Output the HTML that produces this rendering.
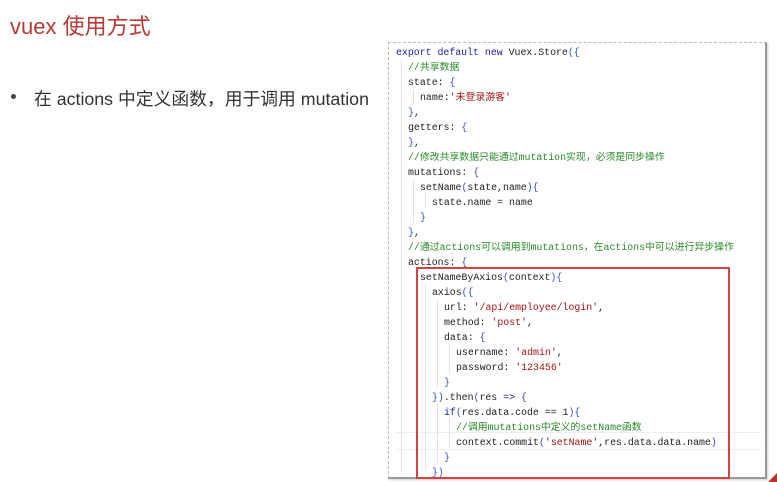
<!DOCTYPE html>
<html><head><meta charset="utf-8"><style>
body{margin:0;width:777px;height:482px;background:#fff;position:relative;overflow:hidden;font-family:"Liberation Sans","Noto Sans CJK SC",sans-serif}
.t{position:absolute;left:10px;top:9px;font-size:22px;color:#b73a36;white-space:nowrap}
.b{position:absolute;left:34px;top:85px;font-size:17.8px;color:#333;white-space:nowrap}
.dot{position:absolute;left:11px;top:94px;width:5px;height:5px;border-radius:50%;background:#444}
.panel{position:absolute;left:388px;top:42px;width:376px;height:434px;border:1px dashed #bbb;border-right:2px solid #999;border-bottom:2px solid #999;box-shadow:1px 1px 2px #ccc}
.c{position:absolute;left:0;top:0;font-family:"Liberation Mono","Noto Sans CJK SC",monospace;font-size:9.9px;color:#222;white-space:pre}
.l{position:absolute;height:15px;line-height:15px}
.k{color:#2222aa}.s{color:#a31515}.m{color:#2a8a2a}.p{color:#3355bb}
.g{position:absolute;width:1px;background:#e2e2e2}
.red{position:absolute;left:416px;top:267px;width:310px;height:208px;border:2px solid #d9403e}
.hl{position:absolute;left:396px;top:432px;width:365px;height:16px;border-top:1px solid #eee;border-bottom:1px solid #eee}
</style></head><body>
<div class="t">vuex 使用方式</div>
<div class="dot"></div>
<div class="b">在 actions 中定义函数，用于调用 mutation</div>
<div class="panel"></div>
<div class="hl"></div>
<div class="g" style="left:401px;top:61px;height:412px"></div>
<div class="g" style="left:413px;top:90px;height:14px"></div>
<div class="g" style="left:413px;top:179px;height:44px"></div>
<div class="g" style="left:425px;top:194px;height:14px"></div>
<div class="g" style="left:425px;top:284px;height:185px"></div>
<div class="g" style="left:437px;top:299px;height:88px"></div>
<div class="g" style="left:449px;top:343px;height:30px"></div>
<div class="g" style="left:437px;top:403px;height:60px"></div>
<div class="g" style="left:449px;top:418px;height:30px"></div>
<div class="c">
<div class="l" style="top:45px;left:396px"><span class="k">export default new</span> Vuex.Store<span class="p">({</span></div>
<div class="l" style="top:60px;left:408px"><span class="m">//共享数据</span></div>
<div class="l" style="top:75px;left:408px">state: <span class="p">{</span></div>
<div class="l" style="top:90px;left:420px">name:<span class="s">'未登录游客'</span></div>
<div class="l" style="top:105px;left:408px"><span class="p">}</span>,</div>
<div class="l" style="top:120px;left:408px">getters: <span class="p">{</span></div>
<div class="l" style="top:135px;left:408px"><span class="p">}</span>,</div>
<div class="l" style="top:150px;left:408px"><span class="m">//修改共享数据只能通过mutation实现，必须是同步操作</span></div>
<div class="l" style="top:165px;left:408px">mutations: <span class="p">{</span></div>
<div class="l" style="top:180px;left:420px">setName<span class="p">(</span>state,name<span class="p">){</span></div>
<div class="l" style="top:195px;left:432px">state.name = name</div>
<div class="l" style="top:210px;left:420px"><span class="p">}</span></div>
<div class="l" style="top:225px;left:408px"><span class="p">}</span>,</div>
<div class="l" style="top:240px;left:408px"><span class="m">//通过actions可以调用到mutations，在actions中可以进行异步操作</span></div>
<div class="l" style="top:255px;left:408px">actions: <span class="p">{</span></div>
<div class="l" style="top:270px;left:420px">setNameByAxios<span class="p">(</span>context<span class="p">){</span></div>
<div class="l" style="top:285px;left:432px">axios<span class="p">({</span></div>
<div class="l" style="top:300px;left:444px">url: <span class="s">'/api/employee/login'</span>,</div>
<div class="l" style="top:315px;left:444px">method: <span class="s">'post'</span>,</div>
<div class="l" style="top:330px;left:444px">data: <span class="p">{</span></div>
<div class="l" style="top:345px;left:456px">username: <span class="s">'admin'</span>,</div>
<div class="l" style="top:360px;left:456px">password: <span class="s">'123456'</span></div>
<div class="l" style="top:375px;left:444px"><span class="p">}</span></div>
<div class="l" style="top:390px;left:432px"><span class="p">})</span>.then<span class="p">(</span>res <span class="k">=&gt;</span> <span class="p">{</span></div>
<div class="l" style="top:405px;left:444px"><span class="k">if</span><span class="p">(</span>res.data.code == 1<span class="p">){</span></div>
<div class="l" style="top:420px;left:456px"><span class="m">//调用mutations中定义的setName函数</span></div>
<div class="l" style="top:435px;left:456px">context.commit<span class="p">(</span><span class="s">'setName'</span>,res.data.data.name<span class="p">)</span></div>
<div class="l" style="top:450px;left:444px"><span class="p">}</span></div>
<div class="l" style="top:465px;left:432px"><span class="p">})</span></div>
</div>
<div class="red"></div>
<div style="position:absolute;left:768px;top:472px;width:0;height:0;border-left:10px solid transparent;border-bottom:10px solid #c0302a"></div>
</body></html>
